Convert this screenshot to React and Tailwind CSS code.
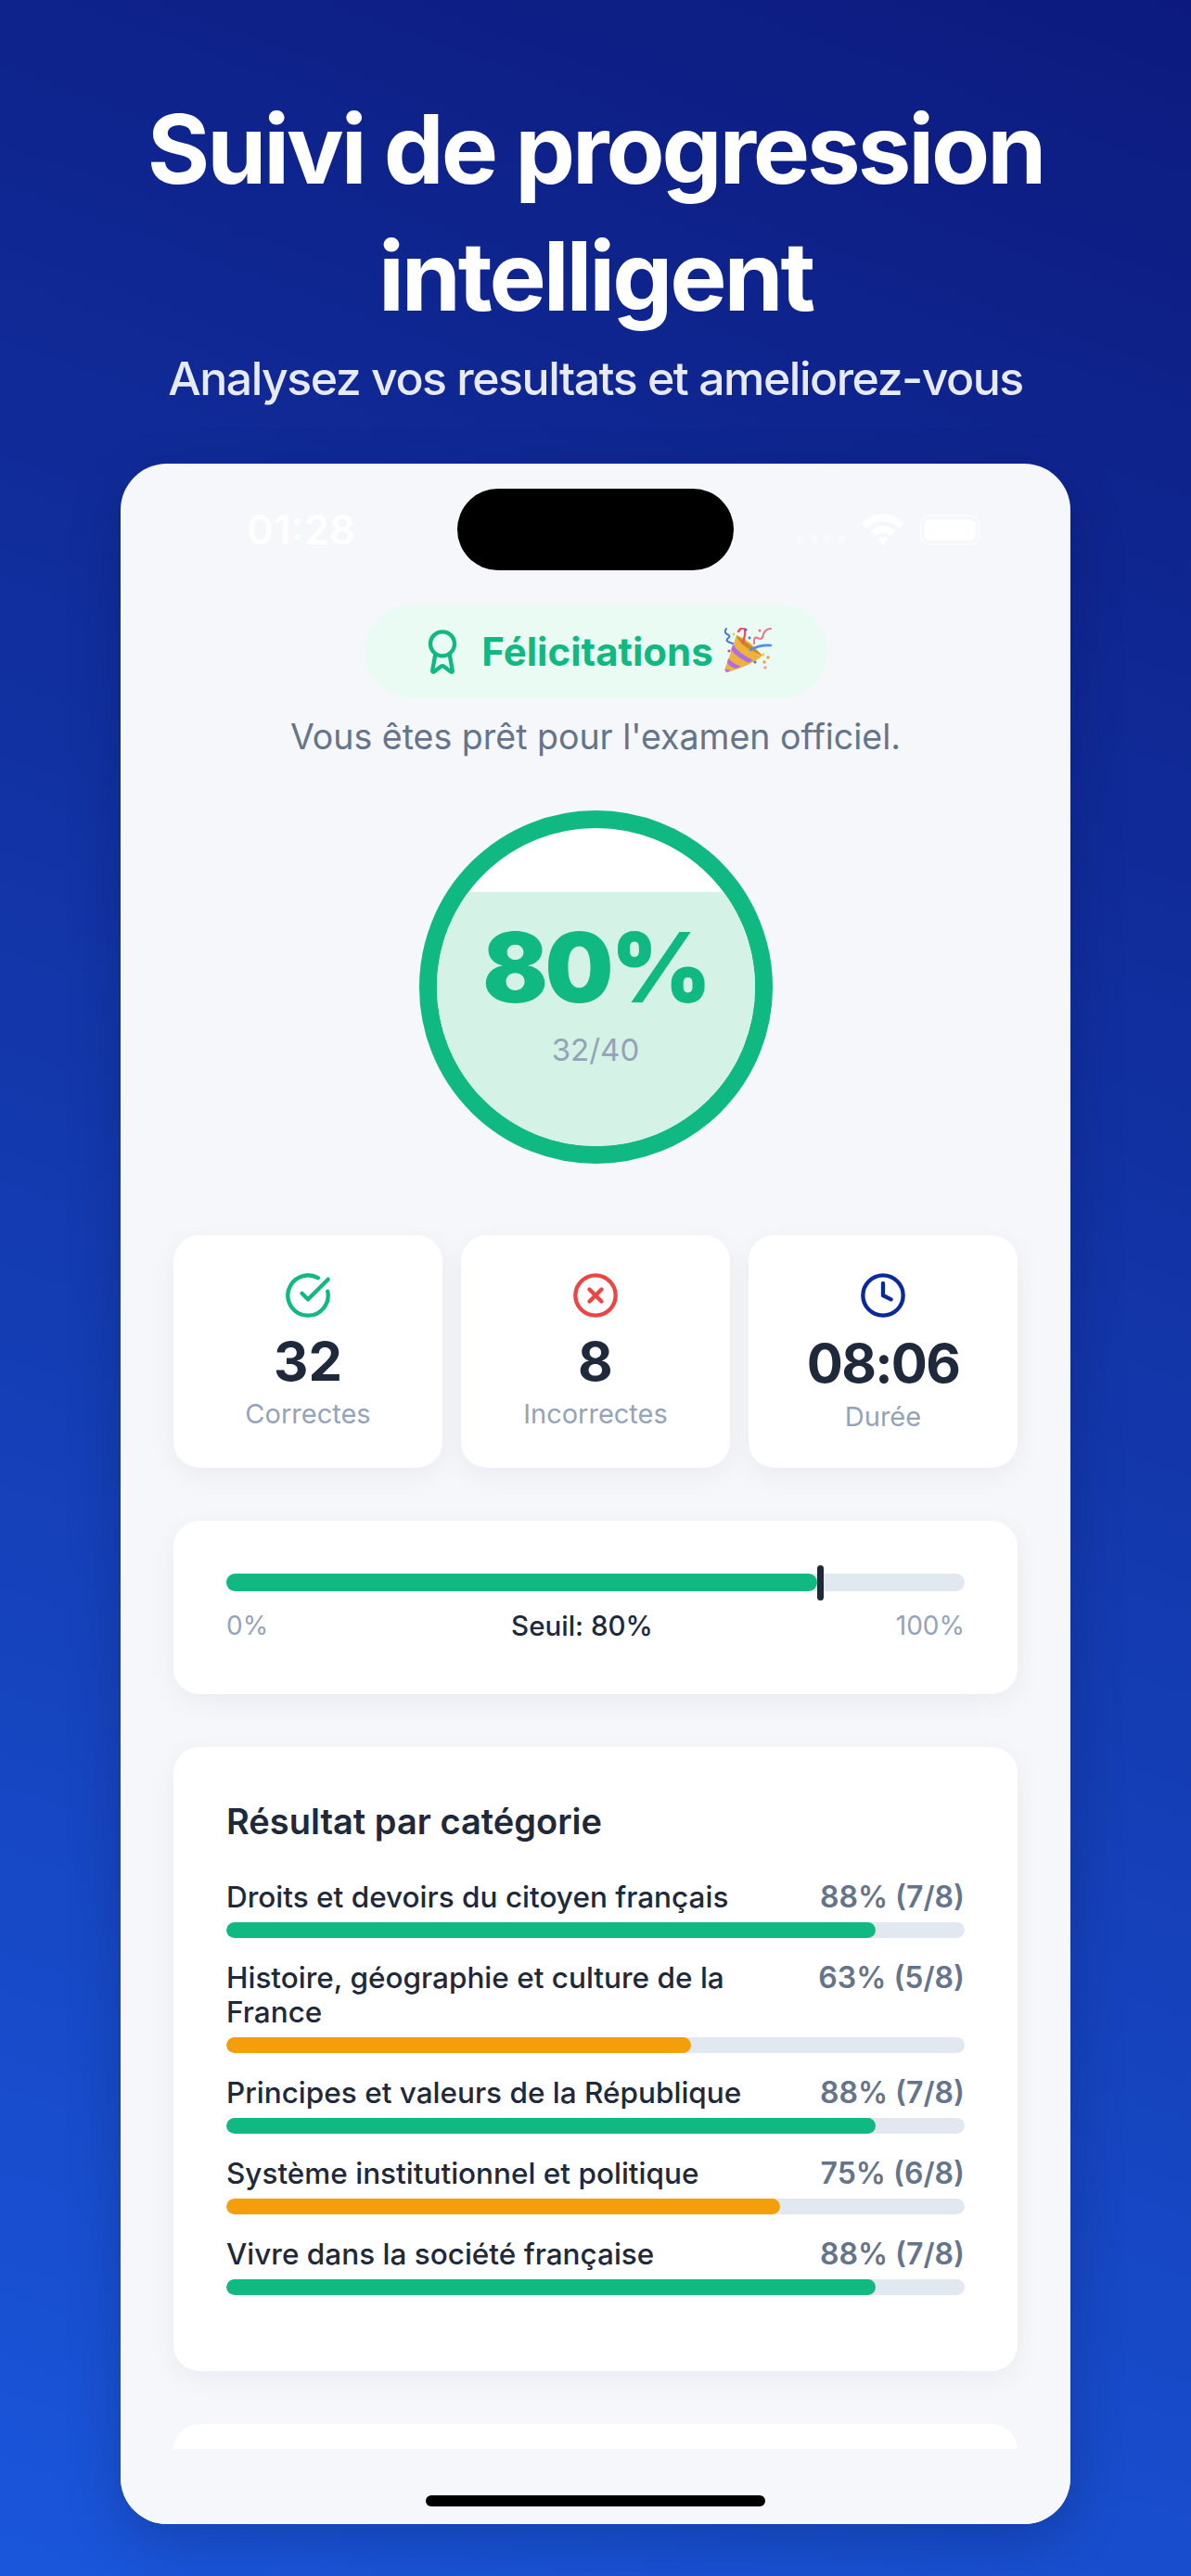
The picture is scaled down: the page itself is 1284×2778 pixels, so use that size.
import React from 'react';
import { Award, CircleCheckBig, CircleX, Clock } from 'lucide-react';

const categories = [
  { label: 'Droits et devoirs du citoyen français', score: '88% (7/8)', pct: 88, ok: true },
  { label: 'Histoire, géographie et culture de la France', score: '63% (5/8)', pct: 63, ok: false },
  { label: 'Principes et valeurs de la République', score: '88% (7/8)', pct: 88, ok: true },
  { label: 'Système institutionnel et politique', score: '75% (6/8)', pct: 75, ok: false },
  { label: 'Vivre dans la société française', score: '88% (7/8)', pct: 88, ok: true },
];

const Popper = () => (
  <svg width="52" height="52" viewBox="0 0 52 52" fill="none" className="ml-[12px] shrink-0">
    {/* cone */}
    <path d="M13 8 Q26 12 41 30 Q30 40 3 48 Q-1 47 1 43 Q8 24 13 8Z" fill="#eeb23e" />
    <path d="M13 8 Q16 20 41 30 Q28 18 13 8Z" fill="#c98a1f" />
    <path d="M9 18 Q16 28 31 35 L26 38 Q14 32 7 24Z" fill="#b06fe0" />
    <path d="M4 33 Q10 39 18 42 L12 44 Q6 42 3 38Z" fill="#b06fe0" />
    <path d="M1 44 Q4 46 7 46 L3 48 Q0 47 1 44Z" fill="#b06fe0" />
    {/* streamers and confetti */}
    <path d="M2 1 Q-1 5 3 7 Q8 9 3 12 Q1 15 9 17" stroke="#3f74e8" strokeWidth="2" strokeLinecap="round" />
    <path d="M15 4 Q19 -2 22 2 Q23 6 20 16" stroke="#ef4f6b" strokeWidth="2.4" strokeLinecap="round" />
    <path d="M32 17 Q31 9 36 11 Q41 14 42 7 Q44 1 50 1" stroke="#ef6f8a" strokeWidth="2" strokeLinecap="round" />
    <path d="M28 24 Q38 18 50 19" stroke="#4f8ef0" strokeWidth="2.6" strokeLinecap="round" />
    <circle cx="23" cy="2" r="1.5" fill="#3f74e8" />
    <circle cx="10" cy="7" r="1.4" fill="#f4c542" />
    <circle cx="27" cy="11" r="1.4" fill="#3f74e8" />
    <circle cx="38" cy="3" r="1.5" fill="#ef6f8a" />
    <circle cx="5" cy="25" r="1.6" fill="#d9506a" />
    <circle cx="42" cy="29" r="1.4" fill="#f4c542" />
    <circle cx="47" cy="32" r="1.8" fill="#f0a050" />
    <circle cx="33" cy="37" r="1.5" fill="#3f74e8" />
    <circle cx="43" cy="37" r="1.8" fill="#f0a050" />
    <circle cx="44" cy="43" r="1.8" fill="#f3a0c0" />
  </svg>
);

const StatCard = ({ icon: Icon, color, value, label, valueClass = 'mt-[13px]', labelClass = 'mt-[7px]' }) => (
  <div className="flex h-[251px] flex-col items-center rounded-[28px] bg-white pt-[39px] shadow-[0_8px_30px_rgba(15,23,42,0.05)]">
    <Icon size={52} strokeWidth={2} className={color} />
    <div className={`${valueClass} text-[58px] font-bold leading-[64px] text-[#1e293b]`}>{value}</div>
    <div className={`${labelClass} text-[29px] leading-[36px] text-[#94a3b8]`}>{label}</div>
  </div>
);

const CategoryRow = ({ label, score, pct, ok }) => (
  <div>
    <div className="flex items-start justify-between gap-[40px] text-[31.5px] leading-[37px]">
      <span className="font-medium text-[#1e293b]">{label}</span>
      <span className="shrink-0 text-[32px] font-semibold text-[#64748b]">{score}</span>
    </div>
    <div className="mt-[9px] h-[17px] overflow-hidden rounded-full bg-[#e2e8f0]">
      <div
        className={`h-full rounded-full ${ok ? 'bg-[#10b981]' : 'bg-[#f59e0b]'}`}
        style={{ width: `${pct}%` }}
      />
    </div>
  </div>
);

export default function App() {
  return (
    <div className="flex h-[2778px] w-[1284px] flex-col items-center overflow-hidden bg-[linear-gradient(200deg,#0c1a7e_0%,#1a56db_100%)] font-['Inter',sans-serif]">
      <h1 className="mt-[92px] w-full text-center text-[103px] font-bold leading-[137px] tracking-[-0.03em] text-white">
        Suivi de progression
        <br />
        intelligent
      </h1>
      <p className="mt-[12px] text-center text-[50px] font-medium leading-[60px] tracking-[-0.03em] text-white/90">
        Analysez vos resultats et ameliorez-vous
      </p>

      {/* Téléphone */}
      <div className="mt-[62px] flex h-[2222px] w-[1024px] flex-col overflow-hidden rounded-[50px] bg-[#f5f7fb] shadow-[0_20px_60px_rgba(0,0,30,0.2)]">
        <div className="grid shrink-0 grid-cols-[1fr_298px_1fr] items-center pt-[27px]">
          <span className="pl-[136px] text-[44px] font-semibold leading-[54px] text-white">01:28</span>
          <div className="h-[88px] rounded-[44px] bg-black" />
          <div className="flex items-center justify-end gap-[17px] pr-[98px]">
            <div className="flex gap-[6px] pt-[20px]">
              <span className="h-[9px] w-[9px] rounded-full bg-white/40" />
              <span className="h-[9px] w-[9px] rounded-full bg-white/40" />
              <span className="h-[9px] w-[9px] rounded-full bg-white/40" />
              <span className="h-[9px] w-[9px] rounded-full bg-white/40" />
            </div>
            <svg width="46" height="34" viewBox="0 0 46 34" fill="white">
              <path d="M23 0C14 0 6 4 0 10l5 6c5-5 11-8 18-8s13 3 18 8l5-6C40 4 32 0 23 0Z" />
              <path d="M23 13c-5 0-10 2-13 6l5 5c2-2 5-3 8-3s6 1 8 3l5-5c-3-4-8-6-13-6Z" />
              <path d="M23 25c-2 0-4 1-5 2l5 7 5-7c-1-1-3-2-5-2Z" />
            </svg>
            <div className="flex h-[33px] w-[64px] items-center justify-center rounded-[10px] border-2 border-white/50">
              <div className="h-[23px] w-[56px] rounded-[7px] bg-white" />
            </div>
          </div>
        </div>

        <div className="min-h-0 flex-1 overflow-hidden px-[57px]">
          <div className="flex flex-col items-center">
            <div className="mt-[37px] flex h-[101px] w-[499px] items-center justify-center rounded-full bg-[#e9fbf3]">
              <Award size={52} strokeWidth={2} className="mr-[16px] text-[#10b981]" />
              <span className="text-[42px] font-bold leading-none text-[#10b981]">Félicitations</span>
              <Popper />
            </div>
            <p className="mt-[19px] text-[37.5px] leading-[46px] text-[#64748b]">Vous êtes prêt pour l'examen officiel.</p>

            {/* Score */}
            <div className="relative mt-[56px] flex h-[381px] w-[381px] flex-col items-center overflow-hidden rounded-full border-[19px] border-[#10b981] bg-white">
              <div className="absolute inset-x-0 bottom-0 h-[80%] bg-[#d5f2e7]" />
              <span className="relative mt-[88px] text-[104px] font-black leading-[124px] tracking-[-0.03em] text-[#10b981]">80%</span>
              <span className="relative mt-[6px] text-[33px] leading-[42px] text-[#94a3b8]">32/40</span>
            </div>
          </div>

          <div className="mt-[77px] grid grid-cols-3 gap-[20px]">
            <StatCard icon={CircleCheckBig} color="text-[#10b981]" value="32" label="Correctes" />
            <StatCard icon={CircleX} color="text-[#ef4444]" value="8" label="Incorrectes" />
            <StatCard
              icon={Clock}
              color="text-[#0a2a9a]"
              value="08:06"
              label="Durée"
              valueClass="mt-[15px] tracking-[-0.03em]"
              labelClass="mt-[8px]"
            />
          </div>

          {/* Seuil */}
          <div className="mt-[57px] h-[187px] rounded-[28px] bg-white px-[57px] pt-[57px] shadow-[0_8px_30px_rgba(15,23,42,0.05)]">
            <div className="relative h-[19px] rounded-full bg-[#e2e8f0]">
              <div className="h-full w-[80%] rounded-full bg-[#10b981]" />
              <div className="absolute left-[80%] top-[-9px] h-[38px] w-[7px] rounded-full bg-[#1e293b]" />
            </div>
            <div className="mt-[20px] flex justify-between text-[28px] leading-[34px]">
              <span className="text-[#94a3b8]">0%</span>
              <span className="text-[29.5px] font-medium text-[#1e293b]">Seuil: 80%</span>
              <span className="text-[#94a3b8]">100%</span>
            </div>
          </div>

          {/* Catégories */}
          <div className="mt-[57px] h-[673px] rounded-[28px] bg-white px-[57px] pt-[57px] shadow-[0_8px_30px_rgba(15,23,42,0.05)]">
            <h2 className="text-[38px] font-semibold leading-[46px] text-[#1e293b]">Résultat par catégorie</h2>
            <div className="mt-[40px] flex flex-col gap-[24px]">
              {categories.map((c) => (
                <CategoryRow key={c.label} {...c} />
              ))}
            </div>
          </div>

          <div className="mt-[57px] h-[200px] rounded-[28px] bg-white" />
        </div>

        <div className="flex h-[81px] shrink-0 justify-center bg-[#f5f7fb] pt-[50px]">
          <div className="h-[12px] w-[366px] rounded-full bg-black" />
        </div>
      </div>
    </div>
  );
}
